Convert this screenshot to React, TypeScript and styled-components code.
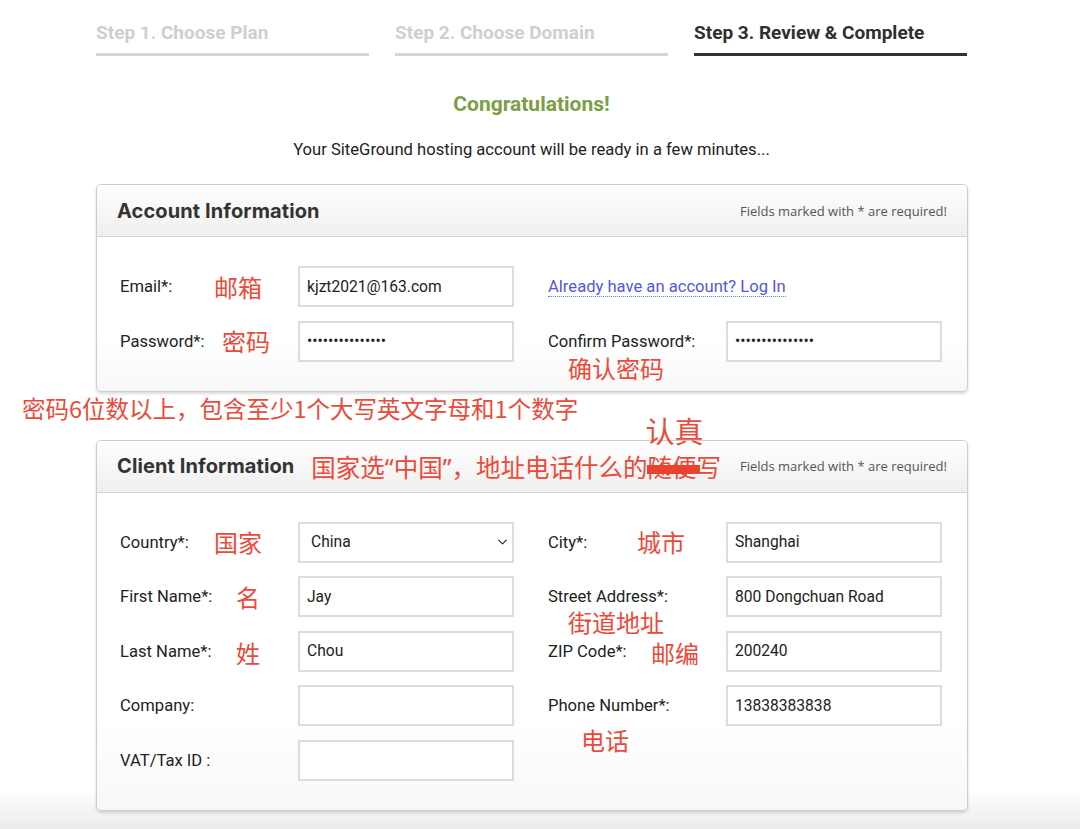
import React from 'react';
import styled, { createGlobalStyle } from 'styled-components';
import { ChevronDown } from 'lucide-react';

const GlobalStyle = createGlobalStyle`
  html, body {
    margin: 0;
    padding: 0;
  }
  body {
    font-family: Roboto, "Liberation Sans", "Noto Sans CJK SC", sans-serif;
    color: #222;
    background: #fff;
  }
`;

const Page = styled.div`
  min-height: 829px;
  box-sizing: border-box;
  padding: 0 0 0 96px;
  background: linear-gradient(to bottom, #fff 0, #fff 790px, #ebebeb 829px);
`;

const Inner = styled.div`
  width: 871px;
`;

const Steps = styled.div`
  display: grid;
  grid-template-columns: repeat(3, 273px);
  column-gap: 26px;
  padding-top: 22px;
`;

const Step = styled.div<{ $active?: boolean }>`
  font-size: 19px;
  line-height: 21px;
  font-weight: 700;
  color: ${p => (p.$active ? '#2f2f2f' : '#cfcfcf')};
  padding-bottom: 10px;
  border-bottom: 3px solid ${p => (p.$active ? '#333' : '#d6d6d6')};
`;

const Congrats = styled.h1`
  margin: 36px 0 0;
  text-align: center;
  font-size: 21px;
  line-height: 24px;
  font-weight: 700;
  color: #7b9e46;
`;

const Lead = styled.p`
  margin: 24px 0 0;
  text-align: center;
  font-size: 16.6px;
  line-height: 20px;
  color: #222;
`;

const Panel = styled.section<{ $top?: number }>`
  margin-top: ${p => p.$top ?? 0}px;
  width: 870px;
  border: 1px solid #cdcdcd;
  border-radius: 5px;
  box-shadow: 0 2px 3px rgba(0, 0, 0, 0.14);
  background: linear-gradient(to bottom, #fff 75%, #f8f8f8 100%);
`;

const PanelHeader = styled.header`
  display: flex;
  align-items: center;
  height: 52px;
  box-sizing: border-box;
  padding: 0 20px 0 20px;
  border-bottom: 1px solid #d3d3d3;
  border-radius: 5px 5px 0 0;
  background: linear-gradient(to bottom, #fff 0%, #efefef 100%);
`;

const PanelTitle = styled.h2`
  margin: 0;
  font-family: Inter, "Noto Sans", sans-serif;
  font-size: 20px;
  font-weight: 700;
  letter-spacing: 0.1px;
  color: #333;
`;

const Required = styled.span`
  margin-left: auto;
  font-family: "Open Sans", "Liberation Sans", sans-serif;
  font-size: 13px;
  color: #555;
`;

const PanelBody = styled.div`
  display: grid;
  grid-template-columns: 394px 394px;
  column-gap: 34px;
  padding: 29px 24px 29px 23px;
`;

const Column = styled.div`
  display: flex;
  flex-direction: column;
  gap: 13.5px;
`;

const Row = styled.div`
  display: grid;
  grid-template-columns: 178px 216px;
  height: 41px;
  align-items: center;
`;

const LabelCell = styled.label`
  position: relative;
  display: flex;
  align-items: center;
  height: 100%;
  font-size: 16.6px;
  color: #222;
`;

const Note = styled.span<{ $left: number; $dy?: number }>`
  position: absolute;
  left: ${p => p.$left}px;
  top: calc(50% + ${p => p.$dy ?? 0}px);
  transform: translateY(-50%);
  font-family: "Noto Sans CJK SC", sans-serif;
  font-size: 24px;
  line-height: 1;
  color: #eb4a3a;
  white-space: nowrap;
`;

const TextInput = styled.input`
  width: 216px;
  height: 41px;
  box-sizing: border-box;
  margin: 0;
  padding: 0 7px;
  border: 2px solid #dcdcdc;
  border-radius: 0;
  background: #fff;
  font-family: Roboto, "Liberation Sans", sans-serif;
  font-size: 15.6px;
  color: #222;
  outline: none;
`;

const SelectBox = styled.div`
  position: relative;
  display: flex;
  align-items: center;
  width: 216px;
  height: 41px;
  box-sizing: border-box;
  padding: 0 11px;
  border: 2px solid #dcdcdc;
  background: #fff;
  font-size: 15.6px;
  color: #222;

  svg {
    position: absolute;
    right: 2px;
    top: 50%;
    transform: translateY(-50%);
  }
`;

const LinkRow = styled.div`
  display: flex;
  align-items: center;
  height: 41px;
`;

const LoginLink = styled.a`
  font-size: 16.6px;
  color: #5656dc;
  text-decoration: none;
  border-bottom: 1px dotted #4f8fd6;
  line-height: 19px;
  margin-top: 1px;
  cursor: pointer;
`;

const Banner = styled.div`
  display: flex;
  align-items: center;
  height: 48px;
  box-sizing: border-box;
  padding-bottom: 13px;
  margin-left: -74px;
  font-family: "Noto Sans CJK SC", sans-serif;
  font-size: 23.5px;
  line-height: 1;
  color: #eb4a3a;
  white-space: nowrap;
`;

const HeaderNote = styled.span`
  margin-left: 17px;
  font-family: "Noto Sans", "Noto Sans CJK SC", sans-serif;
  font-size: 24.5px;
  color: #eb4a3a;
  white-space: nowrap;
`;

const Struck = styled.span`
  position: relative;

  &::after {
    content: '';
    position: absolute;
    left: 0;
    right: -4px;
    top: 44%;
    height: 9px;
    background: #e8432c;
  }
`;

const Correction = styled.span`
  position: absolute;
  left: -2px;
  top: -34px;
  font-size: 29px;
  line-height: 1;
  color: #eb4a3a;
`;

type FieldProps = {
  label: string;
  note?: string;
  noteLeft?: number;
  noteDy?: number;
  children: React.ReactNode;
};

const Field = ({ label, note, noteLeft = 0, noteDy, children }: FieldProps) => (
  <Row>
    <LabelCell>
      {label}
      {note && (
        <Note $left={noteLeft} $dy={noteDy}>
          {note}
        </Note>
      )}
    </LabelCell>
    {children}
  </Row>
);

const Input = ({ value, type = 'text' }: { value?: string; type?: string }) => (
  <TextInput type={type} defaultValue={value} readOnly />
);

export default function App() {
  return (
    <>
      <GlobalStyle />
      <Page>
        <Inner>
          <Steps>
            <Step>Step 1. Choose Plan</Step>
            <Step>Step 2. Choose Domain</Step>
            <Step $active>Step 3. Review &amp; Complete</Step>
          </Steps>

          <Congrats>Congratulations!</Congrats>
          <Lead>Your SiteGround hosting account will be ready in a few minutes...</Lead>

          <Panel $top={24}>
            <PanelHeader>
              <PanelTitle>Account Information</PanelTitle>
              <Required>Fields marked with * are required!</Required>
            </PanelHeader>
            <PanelBody>
              <Column>
                <Field label="Email*:" note="邮箱" noteLeft={94}>
                  <Input value="kjzt2021@163.com" />
                </Field>
                <Field label="Password*:" note="密码" noteLeft={102}>
                  <Input type="password" value="abcdefghijklmno" />
                </Field>
              </Column>
              <Column>
                <LinkRow>
                  <LoginLink>Already have an account? Log In</LoginLink>
                </LinkRow>
                <Field label="Confirm Password*:" note="确认密码" noteLeft={20} noteDy={27}>
                  <Input type="password" value="abcdefghijklmno" />
                </Field>
              </Column>
            </PanelBody>
          </Panel>

          <Banner>密码6位数以上，包含至少1个大写英文字母和1个数字</Banner>

          <Panel>
            <PanelHeader>
              <PanelTitle>Client Information</PanelTitle>
              <HeaderNote>
                国家选“中国”，地址电话什么的
                <Struck>
                  随便
                  <Correction>认真</Correction>
                </Struck>
                写
              </HeaderNote>
              <Required>Fields marked with * are required!</Required>
            </PanelHeader>
            <PanelBody>
              <Column>
                <Field label="Country*:" note="国家" noteLeft={94}>
                  <SelectBox>
                    China
                    <ChevronDown size={15} strokeWidth={2} color="#333" />
                  </SelectBox>
                </Field>
                <Field label="First Name*:" note="名" noteLeft={116}>
                  <Input value="Jay" />
                </Field>
                <Field label="Last Name*:" note="姓" noteLeft={116} noteDy={2}>
                  <Input value="Chou" />
                </Field>
                <Field label="Company:">
                  <Input />
                </Field>
                <Field label="VAT/Tax ID :">
                  <Input />
                </Field>
              </Column>
              <Column>
                <Field label="City*:" note="城市" noteLeft={89}>
                  <Input value="Shanghai" />
                </Field>
                <Field label="Street Address*:" note="街道地址" noteLeft={20} noteDy={25}>
                  <Input value="800 Dongchuan Road" />
                </Field>
                <Field label="ZIP Code*:" note="邮编" noteLeft={103} noteDy={2}>
                  <Input value="200240" />
                </Field>
                <Field label="Phone Number*:" note="电话" noteLeft={33} noteDy={34}>
                  <Input value="13838383838" />
                </Field>
              </Column>
            </PanelBody>
          </Panel>
        </Inner>
      </Page>
    </>
  );
}
